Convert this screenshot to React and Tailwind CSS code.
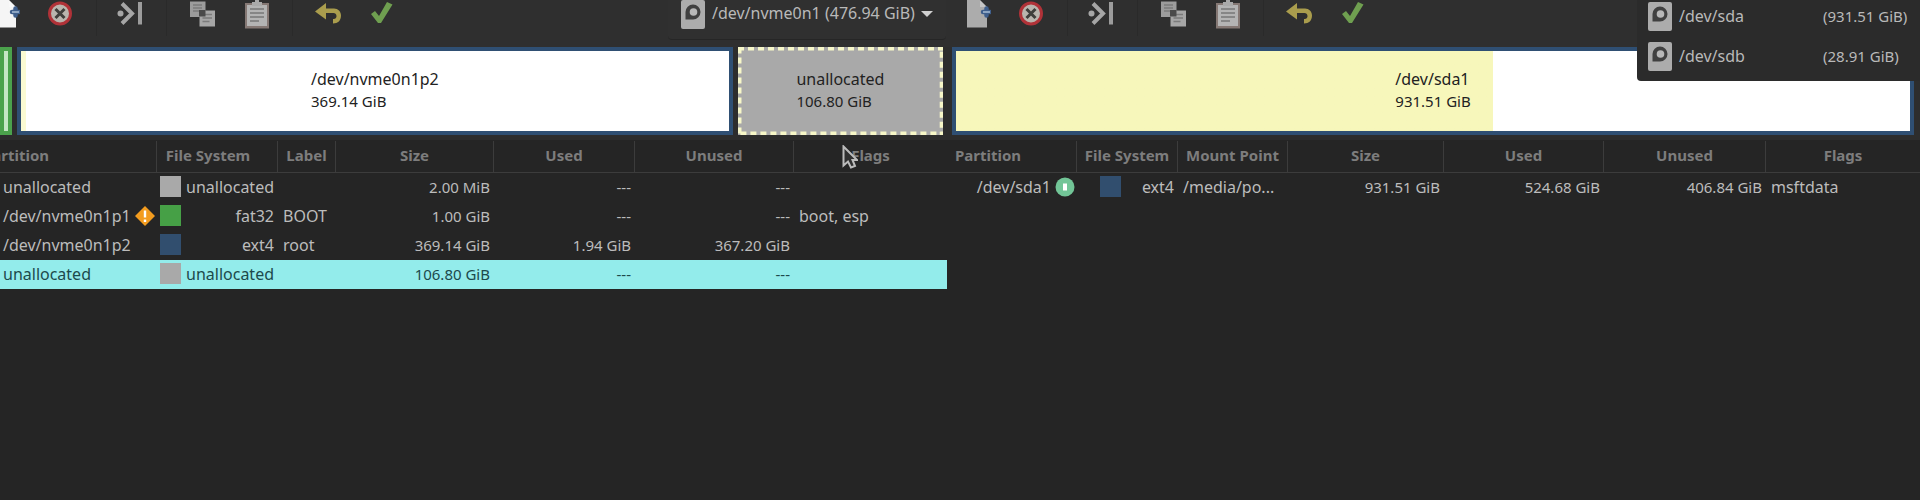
function Icon({ label, className, children }) {
  return (
    <button aria-label={label} className={`flex h-8 w-7 shrink-0 items-center justify-center ${className || ""}`}>
      <svg viewBox="0 0 28 32" className="h-8 w-7" aria-hidden="true">{children}</svg>
    </button>
  );
}

function Separator({ className }) {
  return <span className={`h-9 w-px shrink-0 bg-[#2a2a2a] ${className}`} />;
}

function Tools({ docFill }) {
  return (
    <>
      <Icon label="New">
        <path d="M4 0h13l7 7v20.500H4z" fill={docFill} />
        <path d="M17 0l7 7h-7z" fill="#fff" opacity=".3" />
        <path d="M23.500 8.500v7M20 12h7" stroke="#3f5f8c" strokeWidth="4.500" strokeLinecap="round" />
        <path d="M20 12h7" stroke="#a9bcd4" strokeWidth="1.500" />
      </Icon>
      <Icon label="Delete" className="ml-[26px]">
        <circle cx="14" cy="13.500" r="10.500" fill="#b9b5ae" stroke="#b03238" strokeWidth="3" />
        <path d="M9.500 9l9 9M18.500 9l-9 9" stroke="#3f3f3c" strokeWidth="3" />
      </Icon>
      <Separator className="ml-[22px]" />
      <Icon label="Resize/Move" className="ml-[19px]">
        <circle cx="4.500" cy="13.500" r="3" fill="#a6a6a6" />
        <path d="M6 3.500l10 10-10 10" fill="none" stroke="#a6a6a6" strokeWidth="4" />
        <path d="M24 2v22.500" stroke="#9c9c9c" strokeWidth="4" />
      </Icon>
      <Separator className="ml-[22px]" />
      <Icon label="Copy" className="ml-[22px]">
        <path d="M1 1.500h15.500v15.500H1z" fill="#9c9c9c" />
        <path d="M4 5h9M4 8h9M4 11h6" stroke="#7b7b7b" strokeWidth="1.500" />
        <path d="M10.500 10.500H26v16H10.500z" fill="#a6a6a6" />
        <path d="M16 14.500h7M13.500 18h9.500M13.500 21.500h7" stroke="#7b7b7b" strokeWidth="1.500" />
        <path d="M10 10h6.500v6.500H10z" fill="#4a4a4a" />
      </Icon>
      <Icon label="Paste" className="ml-[27px]">
        <path d="M1 3h24v25.500H1z" fill="#857874" />
        <path d="M3 5h20v21H3z" fill="#b4b4b4" />
        <path d="M8 2h3V0h4v2h3v4H8z" fill="#aaa" />
        <path d="M6 9h14M6 13h14M6 17h14M6 21h9" stroke="#777" strokeWidth="1.600" />
      </Icon>
      <Separator className="ml-5" />
      <Icon label="Undo" className="ml-[21px]">
        <path d="M1 11.500L12 3v5.500h8c4 0 7 3 7 7 0 5-3 8-8 8v-4.500c3 0 3.500-1.500 3.500-3 0-2-1.500-3-3-3H12v6.500z" fill="#aa9d4d" />
      </Icon>
      <Icon label="Apply" className="ml-[27px]">
        <path d="M2 14l4-3 4 5 8-14 5.500 2.500L12 23H9z" fill="#6f9f50" />
      </Icon>
    </>
  );
}

function Disk() {
  return (
    <svg viewBox="0 0 24 29" className="h-[29px] w-6 shrink-0" aria-hidden="true">
      <rect width="24" height="29" rx="2" fill="#acacac" />
      <path d="M4.500 19.500v-7.500a7.500 7.500 0 1 1 7.500 7.500z" fill="#404040" />
      <circle cx="12.500" cy="12" r="3.800" fill="#b8b8b8" />
    </svg>
  );
}

function BarText({ name, size }) {
  return (
    <div className="pb-0.5 leading-[22px] text-[#222]">
      <div className="text-base leading-[22px]">{name}</div>
      <div>{size}</div>
    </div>
  );
}

function Table({ caption, cols, rows }) {
  return (
    <table className="w-full table-fixed border-separate border-spacing-0" aria-label={caption}>
      <colgroup>{cols.map((c) => <col key={c[0]} className={c[1]} />)}</colgroup>
      <thead>
        <tr>
          {cols.map((c, i) => (
            <th key={c[0]} scope="col" className="h-[33px] border-b border-[#3c3c3c] p-0 font-bold text-[#7d7d7d]">
              <div className={`flex h-[31px] items-center justify-center border-[#3c3c3c] pb-0.5 ${i < cols.length - 1 ? "border-r" : ""} ${c[2] || ""}`}>{c[0]}</div>
            </th>
          ))}
        </tr>
      </thead>
      <tbody>
        {rows.map((r, k) => (
          <tr key={k} className={r.selected ? "bg-[#93eceb] text-[#1d4a4c]" : "text-[#bcbcbc]"}>
            {r.cells.map((c, i) => (
              <td key={i} className={`h-[29px] p-0 pb-0.5 whitespace-nowrap ${r.align[i]}`}>{c}</td>
            ))}
          </tr>
        ))}
      </tbody>
    </table>
  );
}

function Fs({ color, name }) {
  return (
    <div className="flex items-center justify-between pr-1 pl-[3px] text-base leading-5">
      <span className={`size-[21px] shrink-0 ${color}`} />
      <span>{name}</span>
    </div>
  );
}

const R = "text-right pr-1";
const L = "text-left pl-[5px] text-base leading-5";
const alignLeft = ["text-left pl-[3px] text-base leading-5", "", L, R, R, R, L];
const alignRight = ["text-base leading-5", "pl-5", L, R, R, R, L];

const warning = (
  <svg viewBox="0 0 20 20" className="size-5" aria-label="Warning">
    <path d="M10 0l10 10-10 10L0 10z" fill="#f39c1f" />
    <path d="M10 4.500v7M10 13.500v2.500" stroke="#fff" strokeWidth="2.400" />
  </svg>
);
const mounted = (
  <svg viewBox="0 0 20 20" className="size-5" aria-label="Mounted">
    <circle cx="10" cy="10" r="9.500" fill="#72c597" />
    <path d="M10 6.500v7" stroke="#fff" strokeWidth="4" />
  </svg>
);

export default function App() {
  return (
    <main className="grid min-h-screen grid-cols-[947fr_973fr] overflow-hidden bg-[#252525] font-['Noto_Sans',sans-serif] text-[15px] leading-5">
      <section className="min-w-0 overflow-hidden">
        <div className="flex h-[47px] items-start bg-[#2f2f2f]">
          <div className="-ml-2 flex"><Tools docFill="#f5f5f5" /></div>
          <button className="mr-px ml-auto flex h-10 w-[278px] items-start rounded-b border-b border-[#262626] bg-[#303030] pl-[13px] text-base leading-5 text-[#b9b9b9]">
            <Disk />
            <span className="pt-[3px] pl-[7px]">/dev/nvme0n1 (476.94 GiB)</span>
            <svg viewBox="0 0 12 6" className="mt-[11px] mr-[13px] ml-auto h-1.5 w-3" aria-hidden="true"><path d="M0 0h12L6 6z" fill="#d0d0d0" /></svg>
          </button>
        </div>
        <div className="flex h-[93px] bg-[#2d2d2d] pr-1 pb-[5px]">
          <div className="w-3 shrink-0 border-y-4 border-r-4 border-[#4ba24c] bg-[#4ba24c] pl-1"><div className="h-full bg-[#c5e6c5]" /></div>
          <div className="ml-[5px] flex flex-[714] items-center justify-center border-4 border-[#2f4f73] bg-white shadow-[inset_5px_0_0_#fafad2]">
            <BarText name="/dev/nvme0n1p2" size="369.14 GiB" />
          </div>
          <div className="relative ml-[5px] flex flex-[207] items-center justify-center bg-[#a9a9a9]">
            <svg className="absolute inset-0 h-full w-full" aria-hidden="true"><rect width="100%" height="100%" fill="none" stroke="#f7f7c8" strokeWidth="7" strokeDasharray="6 4" /></svg>
            <BarText name="unallocated" size="106.80 GiB" />
          </div>
        </div>
        <Table
          caption="nvme0n1 partitions"
          cols={[["Partition", "w-[157px]", "pr-[124px]"], ["File System", "w-[121px]", "pr-[18px]"], ["Label", "w-[58px]"], ["Size", "w-[158px]"], ["Used", "w-[141px]"], ["Unused", "w-[159px]"], ["Flags", ""]]}
          rows={[
            { align: alignLeft, cells: ["unallocated", <Fs color="bg-[#a9a9a9]" name="unallocated" />, "", "2.00 MiB", "---", "---", ""] },
            { align: alignLeft, cells: [<div className="flex items-center justify-between pr-0.5"><span>/dev/nvme0n1p1</span>{warning}</div>, <Fs color="bg-[#46a046]" name="fat32" />, "BOOT", "1.00 GiB", "---", "---", "boot, esp"] },
            { align: alignLeft, cells: ["/dev/nvme0n1p2", <Fs color="bg-[#314e6e]" name="ext4" />, "root", "369.14 GiB", "1.94 GiB", "367.20 GiB", ""] },
            { align: alignLeft, selected: true, cells: ["unallocated", <Fs color="bg-[#a9a9a9]" name="unallocated" />, "", "106.80 GiB", "---", "---", ""] },
          ]}
        />
      </section>
      <section className="relative min-w-0">
        <div className="flex h-[47px] items-start bg-[#2f2f2f] pl-4"><Tools docFill="#acacac" /></div>
        <div className="h-[93px] bg-[#2d2d2d] pr-1.5 pb-[5px] pl-[5px]">
          <div className="flex h-full items-center justify-center border-4 border-[#2f4f73] bg-linear-to-r from-[#f7f7bb] from-[56.3%] to-white to-[56.3%]">
            <BarText name="/dev/sda1" size="931.51 GiB" />
          </div>
        </div>
        <Table
          caption="sda partitions"
          cols={[["Partition", "w-[130px]", "pr-[47px]"], ["File System", "w-[101px]"], ["Mount Point", "w-[110px]"], ["Size", "w-[156px]"], ["Used", "w-[160px]"], ["Unused", "w-[162px]"], ["Flags", ""]]}
          rows={[{ align: alignRight, cells: [<div className="flex items-center justify-end gap-1 pr-0.5"><span>/dev/sda1</span>{mounted}</div>, <Fs color="bg-[#314e6e]" name="ext4" />, "/media/po...", "931.51 GiB", "524.68 GiB", "406.84 GiB", "msftdata"] }]}
        />
        <ul className="absolute top-0 right-0 flex w-[283px] flex-col gap-[11px] rounded-bl bg-[#2b2b2b] pt-0.5 pb-2.5 pl-[11px] text-[#b9b9b9]">
          {[["/dev/sda", "(931.51 GiB)"], ["/dev/sdb", "(28.91 GiB)"]].map((d) => (
            <li key={d[0]}>
              <button className="flex w-full items-center text-left">
                <Disk />
                <span className="w-[151px] pb-0.5 pl-[7px] text-base leading-5">{d[0]}</span>
                <span className="pb-0.5">{d[1]}</span>
              </button>
            </li>
          ))}
        </ul>
      </section>
      <svg viewBox="0 0 16 24" className="pointer-events-none absolute top-[145px] left-[842px] h-6 w-4" aria-hidden="true">
        <path d="M1.500 1.500v19l4.500-4 3 6 4-1.500-2.500-6H15z" fill="#303030" stroke="#bbb" strokeWidth="2" />
      </svg>
    </main>
  );
}
